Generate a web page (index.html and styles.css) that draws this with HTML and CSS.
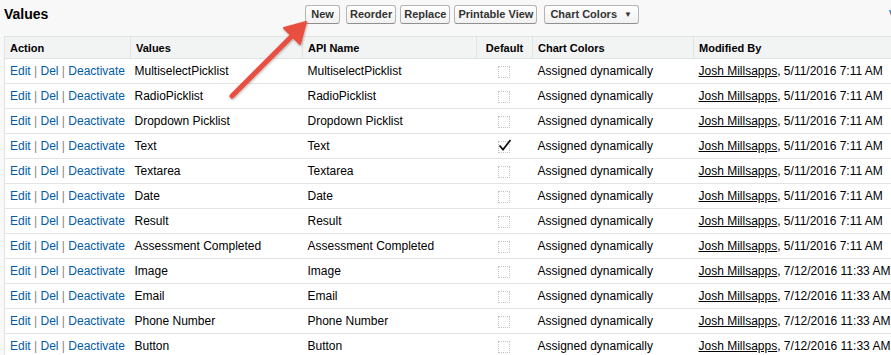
FILE: index.html
```html
<!DOCTYPE html>
<html>
<head>
<meta charset="utf-8">
<link rel="stylesheet" href="styles.css">
</head>
<body>
<div class="page">
  <div class="topbar">
    <h2 class="title">Values</h2>
    <div class="buttons">
      <button class="btn btn-new">New</button>
      <button class="btn">Reorder</button>
      <button class="btn">Replace</button>
      <button class="btn">Printable View</button>
      <button class="btn btn-menu">Chart Colors <span class="caret">▼</span></button>
    </div>
    <a class="corner-link" href="#">V</a>
  </div>
  <table class="list">
    <colgroup>
      <col class="c-action"><col class="c-values"><col class="c-api"><col class="c-default"><col class="c-chart"><col class="c-mod">
    </colgroup>
    <thead>
      <tr><th>Action</th><th>Values</th><th>API Name</th><th class="center">Default</th><th>Chart Colors</th><th>Modified By</th></tr>
    </thead>
    <tbody>
      <tr><td class="act"><a href="#">Edit</a> | <a href="#">Del</a> | <a href="#">Deactivate</a></td><td>MultiselectPicklist</td><td>MultiselectPicklist</td><td class="center"><span class="cb"></span></td><td>Assigned dynamically</td><td><a class="user" href="#">Josh Millsapps</a>, 5/11/2016 7:11 AM</td></tr>
      <tr><td class="act"><a href="#">Edit</a> | <a href="#">Del</a> | <a href="#">Deactivate</a></td><td>RadioPicklist</td><td>RadioPicklist</td><td class="center"><span class="cb"></span></td><td>Assigned dynamically</td><td><a class="user" href="#">Josh Millsapps</a>, 5/11/2016 7:11 AM</td></tr>
      <tr><td class="act"><a href="#">Edit</a> | <a href="#">Del</a> | <a href="#">Deactivate</a></td><td>Dropdown Picklist</td><td>Dropdown Picklist</td><td class="center"><span class="cb"></span></td><td>Assigned dynamically</td><td><a class="user" href="#">Josh Millsapps</a>, 5/11/2016 7:11 AM</td></tr>
      <tr><td class="act"><a href="#">Edit</a> | <a href="#">Del</a> | <a href="#">Deactivate</a></td><td>Text</td><td>Text</td><td class="center"><span class="cb checked"><svg viewBox="0 0 14 12" width="14" height="12"><path d="M1.5 6.5 L5 10.5 L12.5 1" fill="none" stroke="#111" stroke-width="1.8"/></svg></span></td><td>Assigned dynamically</td><td><a class="user" href="#">Josh Millsapps</a>, 5/11/2016 7:11 AM</td></tr>
      <tr><td class="act"><a href="#">Edit</a> | <a href="#">Del</a> | <a href="#">Deactivate</a></td><td>Textarea</td><td>Textarea</td><td class="center"><span class="cb"></span></td><td>Assigned dynamically</td><td><a class="user" href="#">Josh Millsapps</a>, 5/11/2016 7:11 AM</td></tr>
      <tr><td class="act"><a href="#">Edit</a> | <a href="#">Del</a> | <a href="#">Deactivate</a></td><td>Date</td><td>Date</td><td class="center"><span class="cb"></span></td><td>Assigned dynamically</td><td><a class="user" href="#">Josh Millsapps</a>, 5/11/2016 7:11 AM</td></tr>
      <tr><td class="act"><a href="#">Edit</a> | <a href="#">Del</a> | <a href="#">Deactivate</a></td><td>Result</td><td>Result</td><td class="center"><span class="cb"></span></td><td>Assigned dynamically</td><td><a class="user" href="#">Josh Millsapps</a>, 5/11/2016 7:11 AM</td></tr>
      <tr><td class="act"><a href="#">Edit</a> | <a href="#">Del</a> | <a href="#">Deactivate</a></td><td>Assessment Completed</td><td>Assessment Completed</td><td class="center"><span class="cb"></span></td><td>Assigned dynamically</td><td><a class="user" href="#">Josh Millsapps</a>, 5/11/2016 7:11 AM</td></tr>
      <tr><td class="act"><a href="#">Edit</a> | <a href="#">Del</a> | <a href="#">Deactivate</a></td><td>Image</td><td>Image</td><td class="center"><span class="cb"></span></td><td>Assigned dynamically</td><td><a class="user" href="#">Josh Millsapps</a>, 7/12/2016 11:33 AM</td></tr>
      <tr><td class="act"><a href="#">Edit</a> | <a href="#">Del</a> | <a href="#">Deactivate</a></td><td>Email</td><td>Email</td><td class="center"><span class="cb"></span></td><td>Assigned dynamically</td><td><a class="user" href="#">Josh Millsapps</a>, 7/12/2016 11:33 AM</td></tr>
      <tr><td class="act"><a href="#">Edit</a> | <a href="#">Del</a> | <a href="#">Deactivate</a></td><td>Phone Number</td><td>Phone Number</td><td class="center"><span class="cb"></span></td><td>Assigned dynamically</td><td><a class="user" href="#">Josh Millsapps</a>, 7/12/2016 11:33 AM</td></tr>
      <tr><td class="act"><a href="#">Edit</a> | <a href="#">Del</a> | <a href="#">Deactivate</a></td><td>Button</td><td>Button</td><td class="center"><span class="cb"></span></td><td>Assigned dynamically</td><td><a class="user" href="#">Josh Millsapps</a>, 7/12/2016 11:33 AM</td></tr>
    </tbody>
  </table>
  <svg class="arrow" width="100" height="100" viewBox="0 0 100 100">
    <defs>
      <filter id="sh" x="-20%" y="-20%" width="140%" height="140%">
        <feDropShadow dx="0.5" dy="1" stdDeviation="1" flood-color="#000" flood-opacity="0.35"/>
      </filter>
    </defs>
    <g filter="url(#sh)">
      <line x1="12" y1="86" x2="76" y2="22" stroke="#e8503f" stroke-width="5" stroke-linecap="round"/>
      <path d="M86 12 L64 18 L80 34 Z" fill="#e8503f" stroke="#e8503f" stroke-width="2" stroke-linejoin="round"/>
    </g>
  </svg>
</div>
</body>
</html>
```

FILE: styles.css
```css
html, body {
  margin: 0;
  padding: 0;
}
body {
  background: #f8f8f8;
  font-family: "Liberation Sans", Arial, sans-serif;
  color: #000;
  overflow: hidden;
  width: 891px;
  height: 355px;
}
.page {
  position: relative;
  width: 891px;
  height: 355px;
  overflow: hidden;
}
.topbar {
  height: 36px;
  display: flex;
  align-items: flex-start;
  position: relative;
}
.title {
  margin: 0;
  padding: 5px 0 0 4px;
  font-size: 14px;
  font-weight: bold;
  line-height: 18px;
  width: 301px;
  color: #000;
}
.buttons {
  display: flex;
  gap: 4px;
  padding-top: 5px;
}
.btn {
  font-family: "Liberation Sans", Arial, sans-serif;
  font-size: 11px;
  font-weight: bold;
  color: #333;
  height: 19px;
  padding: 0 3px;
  border: 1px solid #b5b5b5;
  border-bottom-color: #8f8f8f;
  border-radius: 3px;
  background: linear-gradient(#ffffff, #f1f1f1);
  line-height: 17px;
  margin: 0;
}
.btn-new {
  min-width: 35px;
  margin-right: 2px;
}
.btn-menu {
  margin-left: 3px;
  padding: 0 6px 0 5px;
}
.caret {
  font-size: 8px;
  margin-left: 4px;
  vertical-align: 1px;
}
.corner-link {
  position: absolute;
  right: -6px;
  top: 8px;
  color: #015ba7;
  text-decoration: none;
  font-size: 12px;
}
.list {
  margin-left: 4px;
  border-collapse: collapse;
  table-layout: fixed;
  width: 920px;
  background: #fff;
  font-size: 12px;
}
.c-action { width: 126px; }
.c-values { width: 172px; }
.c-api { width: 174px; }
.c-default { width: 56px; }
.c-chart { width: 161px; }
.c-mod { width: 231px; }
.list th {
  background: #f2f3f3;
  text-align: left;
  font-size: 11px;
  font-weight: bold;
  color: #000;
  height: 21px;
  padding: 0 5px;
  border-top: 1px solid #e0e3e5;
  border-bottom: 1px solid #e0e3e5;
  border-left: 1px solid #e0e3e5;
}
.list td {
  height: 24px;
  padding: 0 5px 0 4px;
  border-bottom: 1px solid #e3e3e3;
  white-space: nowrap;
  overflow: hidden;
  vertical-align: middle;
}
.list td:first-child {
  border-left: 1px solid #e0e3e5;
  padding-left: 5px;
}
.list td:nth-child(3),
.list td:nth-child(5),
.list td:nth-child(6) {
  padding-left: 5px;
}
.list .center {
  text-align: center;
}
.act {
  color: #888;
}
.act a {
  color: #015ba7;
  text-decoration: none;
}
.user {
  color: #000;
  text-decoration: underline;
}
.cb {
  display: inline-block;
  width: 10px;
  height: 10px;
  border: 1px dotted #c4c4c4;
  vertical-align: middle;
  position: relative;
}
.cb svg {
  position: absolute;
  left: -1px;
  top: -3px;
}
.arrow {
  position: absolute;
  left: 220px;
  top: 10px;
  pointer-events: none;
}
```
